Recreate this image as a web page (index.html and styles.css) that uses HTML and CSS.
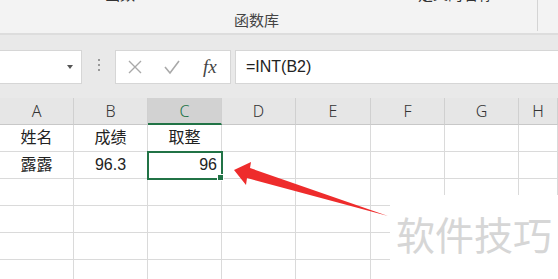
FILE: index.html
```html
<!doctype html>
<html lang="zh-CN">
<head>
    <meta charset="UTF-8">
    <title>取整</title>
    <link rel="stylesheet" href="styles.css">
</head>
<body>
<div class="ribbon">
    <span class="cut cut-left">函数</span>
    <span class="cut cut-right">定义的名称</span>
    <span class="group-name">函数库</span>
    <span class="sep"></span>
</div>
<div class="formula-bar">
    <div class="name-box"><span class="caret"></span></div>
    <div class="dots"><i></i><i></i><i></i></div>
    <div class="fx-box">
        <svg width="16" height="16" viewBox="0 0 16 16"><path d="M2 2 L14 14 M14 2 L2 14" stroke="#a9a9a9" stroke-width="1.4" fill="none"/></svg>
        <svg width="18" height="16" viewBox="0 0 18 16"><path d="M2 8 L7 14 L16 2" stroke="#a9a9a9" stroke-width="1.6" fill="none"/></svg>
        <span class="fx">fx</span>
    </div>
    <div class="formula">=INT(B2)</div>
</div>
<div class="sheet">
    <div class="hd">A</div><div class="hd">B</div><div class="hd active">C</div><div class="hd">D</div><div class="hd">E</div><div class="hd">F</div><div class="hd">G</div><div class="hd">H</div>
    <div class="c">姓名</div><div class="c">成绩</div><div class="c">取整</div><div class="c"></div><div class="c"></div><div class="c"></div><div class="c"></div><div class="c"></div>
    <div class="c">露露</div><div class="c">96.3</div><div class="c num selected">96</div><div class="c"></div><div class="c"></div><div class="c"></div><div class="c"></div><div class="c"></div>
    <div class="c"></div><div class="c"></div><div class="c"></div><div class="c"></div><div class="c"></div><div class="c"></div><div class="c"></div><div class="c"></div>
    <div class="c"></div><div class="c"></div><div class="c"></div><div class="c"></div><div class="c"></div><div class="c"></div><div class="c"></div><div class="c"></div>
    <div class="c"></div><div class="c"></div><div class="c"></div><div class="c"></div><div class="c"></div><div class="c"></div><div class="c"></div><div class="c"></div>
    <div class="c"></div><div class="c"></div><div class="c"></div><div class="c"></div><div class="c"></div><div class="c"></div><div class="c"></div><div class="c"></div>

    <svg class="arrow" width="170" height="62" viewBox="0 0 170 62">
        <path d="M4 12 L21 4 L20 10 L158 58 L17 20 L16 27 Z" fill="#ee2c2c"/>
    </svg>
    <div class="watermark">软件技巧</div>
</div>
</body>
</html>
```

FILE: styles.css
```css
* {
    box-sizing: border-box;
}
body {
    margin: 0;
    width: 558px;
    height: 279px;
    overflow: hidden;
    background: #fff;
    font-family: "Liberation Sans", "Noto Sans CJK SC", sans-serif;
    color: #222;
}
.ribbon {
    position: relative;
    height: 35px;
    background: #f3f3f3;
    border-bottom: 2px solid #dddddd;
    overflow: hidden;
}
.cut {
    position: absolute;
    top: -17px;
    font-size: 15px;
    color: #333;
    font-family: "Noto Sans CJK SC", sans-serif;
}
.cut-left { left: 105px; }
.cut-right { left: 418px; }
.group-name {
    position: absolute;
    left: 234px;
    top: 9px;
    font-size: 15px;
    color: #444;
    font-family: "Noto Sans CJK SC", sans-serif;
}
.sep {
    position: absolute;
    left: 537px;
    top: 0;
    height: 31px;
    border-left: 1px solid #d4d4d4;
}
.formula-bar {
    height: 63px;
    background: #e9e9e9;
    display: flex;
    align-items: flex-start;
    padding-top: 15px;
}
.name-box {
    width: 82px;
    height: 34px;
    background: #fff;
    border: 1px solid #d6d6d6;
    border-left: 0;
    position: relative;
}
.caret {
    position: absolute;
    right: 8px;
    top: 14px;
    border-left: 3px solid transparent;
    border-right: 3px solid transparent;
    border-top: 4px solid #555;
}
.dots {
    width: 33px;
    display: flex;
    flex-direction: column;
    align-items: center;
    gap: 3px;
    padding-top: 9px;
}
.dots i {
    width: 2px;
    height: 2px;
    background: #999;
}
.fx-box {
    width: 116px;
    height: 34px;
    background: #fff;
    border: 1px solid #d6d6d6;
    display: flex;
    align-items: center;
    padding-left: 11px;
    gap: 20px;
}
.fx {
    font-family: "Liberation Serif", serif;
    font-style: italic;
    font-size: 19px;
    color: #444;
    margin-left: 2px;
}
.formula {
    flex: 1;
    margin-left: 4px;
    height: 34px;
    background: #fff;
    border: 1px solid #d6d6d6;
    border-right: 0;
    font-size: 16px;
    line-height: 32px;
    padding-left: 10px;
    color: #222;
}
.sheet {
    position: relative;
    display: grid;
    grid-template-columns: 74px 74px 74px 74px 75px 74px 74px 1fr;
    grid-auto-rows: 27px;
}
.hd {
    background: #e6e6e6;
    border-right: 1px solid #d0d0d0;
    border-bottom: 1px solid #c8c8c8;
    text-align: center;
    font-size: 16px;
    line-height: 26px;
    color: #333;
    font-family: "Noto Sans", sans-serif;
    font-weight: 300;
}
.hd.active {
    background: #d2d2d2;
    color: #217346;
    border-bottom: 2px solid #217346;
}
.c {
    border-right: 1px solid #dadada;
    border-bottom: 1px solid #dadada;
    text-align: center;
    font-size: 16px;
    line-height: 26px;
    color: #222;
}
.num {
    text-align: right;
    padding-right: 4px;
}
.selected {
    position: relative;
    outline: 2px solid #217346;
    outline-offset: -1px;
}
.selected::after {
    content: "";
    position: absolute;
    right: -3px;
    bottom: -3px;
    width: 5px;
    height: 5px;
    background: #217346;
    border: 1px solid #fff;
}
.arrow {
    position: absolute;
    left: 230px;
    top: 60px;
    overflow: visible;
}
.watermark {
    position: absolute;
    left: 390px;
    top: 97px;
    width: 168px;
    height: 90px;
    background: #fff;
    font-family: "Noto Sans CJK SC", sans-serif;
    font-size: 39px;
    color: #d6d6d6;
    padding: 19px 0 0 6px;
    line-height: 1;
    letter-spacing: 0;
}
```
